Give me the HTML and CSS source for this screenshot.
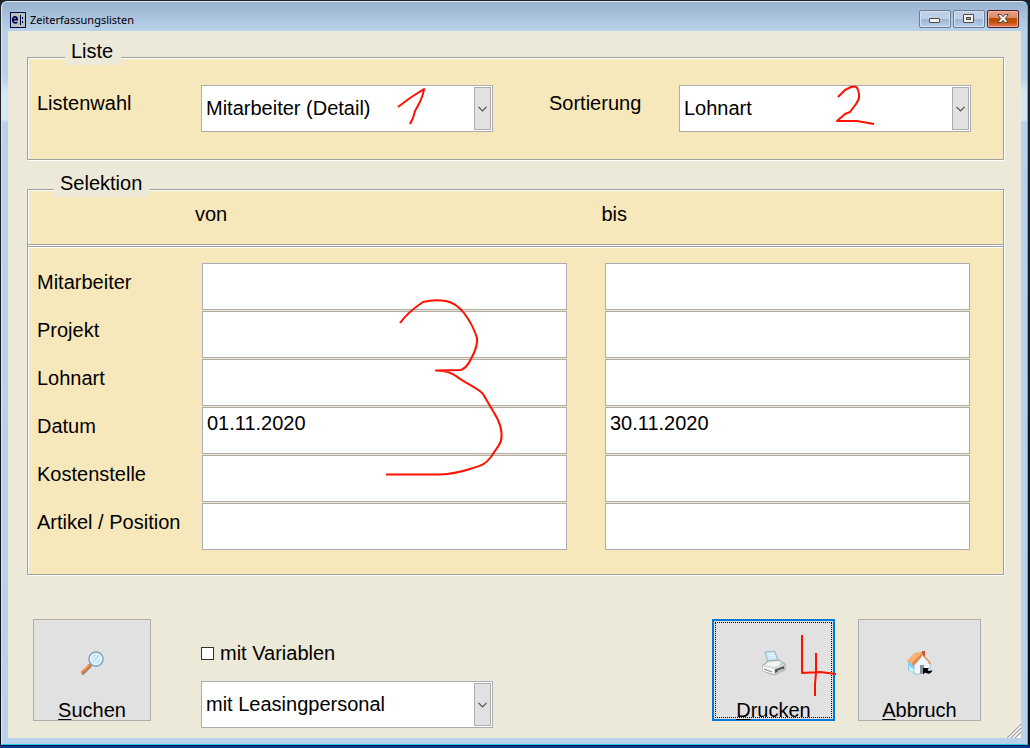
FILE: index.html
```html
<!DOCTYPE html>
<html lang="de">
<head>
<meta charset="utf-8">
<title>Zeiterfassungslisten</title>
<link rel="stylesheet" href="styles.css">
</head>
<body>
<div class="window">
  <header class="titlebar">
    <svg class="app-icon" width="16" height="16" viewBox="0 0 16 16" aria-hidden="true">
      <rect x=".5" y=".5" width="15" height="15" fill="#b4c4bd" stroke="#04044e"/>
      <path d="M3 7.7H7.2C7.2 3.8 2.7 3.8 2.7 7.7C2.7 11 5.6 11.3 7.3 10.2" fill="none" stroke="#04044e" stroke-width="1.8"/>
      <path d="M10.5 3V13" stroke="#04044e"/>
      <path d="M12 5h1v2h-1zM12 9h1v2h-1z" fill="#04044e"/>
    </svg>
    <h1 class="title">Zeiterfassungslisten</h1>
    <div class="controls">
      <button class="control" type="button" aria-label="Minimieren">
        <svg width="12" height="10" viewBox="0 0 12 10"><rect x=".5" y="4.5" width="10" height="4" rx=".5" fill="#f5f3ef" stroke="#534747"/></svg>
      </button>
      <button class="control" type="button" aria-label="Maximieren">
        <svg width="12" height="10" viewBox="0 0 12 10"><rect x=".5" y=".5" width="10" height="8" rx=".5" fill="#f5f3ef" stroke="#534747"/><rect x="3.5" y="3.5" width="4" height="2" fill="#88a6c7" stroke="#534747"/></svg>
      </button>
      <button class="control control-close" type="button" aria-label="Schließen">
        <svg width="12" height="10" viewBox="0 0 12 10"><path d="M.8.5H4.2L6 2.8L7.8.5H11.2L8.3 4.5L11.2 8.5H7.8L6 6.3L4.2 8.5H.8L3.7 4.5Z" fill="#f5f1ef" stroke="#534747"/></svg>
      </button>
    </div>
  </header>

  <form class="content">
    <fieldset class="group">
      <legend class="legend legend-list">Liste</legend>
      <div class="list-row">
        <label class="label" for="liste">Listenwahl</label>
        <div class="combo">
          <select class="select" id="liste"><option>Mitarbeiter (Detail)</option></select>
          <span class="arrow"><svg width="9" height="6" viewBox="0 0 9 6"><path d="M.5.8L4.5 4.8L8.5.8" fill="none" stroke="#55504d" stroke-width="1.2"/></svg></span>
        </div>
        <label class="label label-sort" for="sort">Sortierung</label>
        <div class="combo">
          <select class="select" id="sort"><option>Lohnart</option></select>
          <span class="arrow"><svg width="9" height="6" viewBox="0 0 9 6"><path d="M.5.8L4.5 4.8L8.5.8" fill="none" stroke="#55504d" stroke-width="1.2"/></svg></span>
        </div>
      </div>
    </fieldset>

    <fieldset class="group group-selection">
      <legend class="legend">Selektion</legend>
      <div class="range-head"><span>von</span><span>bis</span></div>
      <div class="range-grid">
        <label class="label" for="ma">Mitarbeiter</label>
        <input class="field" id="ma" type="text"><input class="field field-to" type="text" aria-label="Mitarbeiter bis">
        <label class="label" for="pr">Projekt</label>
        <input class="field" id="pr" type="text"><input class="field field-to" type="text" aria-label="Projekt bis">
        <label class="label" for="la">Lohnart</label>
        <input class="field" id="la" type="text"><input class="field field-to" type="text" aria-label="Lohnart bis">
        <label class="label" for="da">Datum</label>
        <input class="field" id="da" type="text" value="01.11.2020"><input class="field field-to" type="text" value="30.11.2020" aria-label="Datum bis">
        <label class="label" for="ks">Kostenstelle</label>
        <input class="field" id="ks" type="text"><input class="field field-to" type="text" aria-label="Kostenstelle bis">
        <label class="label" for="ap">Artikel / Position</label>
        <input class="field" id="ap" type="text"><input class="field field-to" type="text" aria-label="Artikel / Position bis">
      </div>
    </fieldset>

    <div class="footer">
      <button class="action action-search" type="button">
        <svg width="24" height="24" viewBox="0 0 24 24" aria-hidden="true">
          <path d="M3 22L10 15" stroke="#8d8584" stroke-width="3.400" stroke-linecap="round"/>
          <path d="M2.500 21L9.500 14" stroke="#f07d38" stroke-width="2.600" stroke-linecap="round"/>
          <path d="M3 19.500L8.500 14" stroke="#ffc07c"/>
          <circle cx="16" cy="8" r="7" fill="#cfeaf8" stroke="#7fa0b9" stroke-width="1.400"/>
          <circle cx="16" cy="8" r="5.600" fill="#d6f0fb" stroke="#f2fbff"/>
          <path d="M12 7L16 3M13 11L19 4M17 12L20 9" stroke="#b9dff2" stroke-width="1.300"/>
        </svg>
        <span><u>S</u>uchen</span>
      </button>
      <div class="options">
        <label class="check"><input class="checkbox" type="checkbox">mit Variablen</label>
        <div class="combo">
          <select class="select" aria-label="Personal"><option>mit Leasingpersonal</option></select>
          <span class="arrow"><svg width="9" height="6" viewBox="0 0 9 6"><path d="M.5.8L4.5 4.8L8.5.8" fill="none" stroke="#55504d" stroke-width="1.2"/></svg></span>
        </div>
      </div>
      <button class="action action-default" type="button">
        <svg width="24" height="24" viewBox="0 0 24 24" aria-hidden="true">
          <path d="M3 1L13 .5L16 10L6 12Z" fill="#c1e4f8" stroke="#8baabd" stroke-width=".8"/>
          <path d="M5 3L12 2M6 5L13 4M6.500 7L14 6" stroke="#f2fbff"/>
          <path d="M1 14L6 10L17 9L23 13V19L12 24L1 20Z" fill="#d6dad7" stroke="#8f9692" stroke-width=".8"/>
          <path d="M3 14L7 11L17 10L21 13L12 16Z" fill="#f3f6f3"/>
          <path d="M1 15L12 18V23L1 20Z" fill="#fafafa"/>
          <path d="M2 18L10 21" stroke="#7a7e7c"/>
          <path d="M13 18.500L22 15V18L13 22Z" fill="#4e5653"/>
          <path d="M15 20L21 17.500L22 20L17 22Z" fill="#c1c5c3"/>
          <path d="M18 13H20" stroke="#54c278"/>
        </svg>
        <span><u>D</u>rucken</span>
      </button>
      <button class="action action-cancel" type="button">
        <svg width="26" height="24" viewBox="0 0 26 24" aria-hidden="true">
          <path d="M15 0H18V8H15Z" fill="#cb5037"/>
          <path d="M1 11L8 14V23L1 19Z" fill="#83cdf0"/>
          <path d="M2 15L7 18L9 14L7 22L2 19Z" fill="#c9effc"/>
          <path d="M7 15L15 5L23 13V20L10 23.500L7 22Z" fill="#f1f7fd" stroke="#93b7d4" stroke-width=".8"/>
          <path d="M13 14H17V22L13 23Z" fill="#8592a1"/>
          <path d="M0 10L8 2L15 1L6 13Z" fill="#f49550"/>
          <path d="M2 10L10 2M4 11L13 2" stroke="#ffc88a" stroke-width="1.200"/>
          <path d="M15 2L24 12L22 13L15 5L6 15L5 13Z" fill="#e68043"/>
          <path d="M15 4L22 11.500L21 12L15 6Z" fill="#eef5fb"/>
          <path d="M16 17H22L20.500 19C22 20.500 24 20 25.500 19C24.500 23 20.500 23.500 18.500 21.500L16 23.500Z" fill="#000"/>
        </svg>
        <span><u>A</u>bbruch</span>
      </button>
    </div>
    <svg class="grip" width="16" height="16" viewBox="0 0 16 16" aria-hidden="true">
      <path d="M0 16L16 0V16Z" fill="#fbfaf5"/>
      <path d="M2 16L16 2M6 16L16 6M10 16L16 10" stroke="#9d9da1" stroke-width="1.200"/>
    </svg>
  </form>
</div>

<svg class="ink" width="1030" height="748" viewBox="0 0 1030 748" aria-hidden="true">
  <path d="M398 107L410 98L424 89L423 94L420 102L415 111L413 118L410 124"/>
  <path d="M838 97L845 90L851 87Q857 85 858 90Q861 98 856 104L850 112L845 114L837 121L857 121L874 124"/>
  <path d="M400 323Q408 312 423 302Q434 299 446 301Q456 303 464 313Q473 325 477 338Q478 346 472 357Q467 368 461 370L436 370.500Q450 371 456 376C466 384 477 387 483 394L493 411Q504 428 501 441C498 448 495 450 491 457C484 466 479 466 470 469Q454 474 440 474.500H386"/>
  <path d="M802 635V673L820 672L836 674M816 653V673L815 684V696"/>
</svg>
</body>
</html>
```
FILE: styles.css
```css
* { box-sizing: border-box; }

body {
  margin: 0;
  min-height: 100vh;
  display: flex;
  padding: 1px 2px 3px 1px;
  background: linear-gradient(to bottom, #1f2227 0, #0a0c14 745px, #03318e 746px);
  font-family: "Liberation Sans", Arial, sans-serif;
  font-size: 20px;
  line-height: 23px;
  color: #000;
}

.window {
  flex: 1;
  display: flex;
  flex-direction: column;
  padding: 0 6px 6px;
  border: 1px solid #dce9f5;
  border-right-color: #25c9e6;
  border-bottom-color: #25c9e6;
  border-radius: 6px 6px 0 0;
  background: linear-gradient(to bottom, #98b2cf 0, #b9d1ea 29px, #b9d1ea 75px, #d5e7f5 90px, #d5e7f5 118px, #b9d1ea 120px);
}

.titlebar {
  display: flex;
  align-items: center;
  height: 29px;
  padding: 4px 2px 0 2px;
}

.app-icon { margin-top: 2px; }

.title {
  flex: 1;
  margin: 2px 0 0 4px;
  font: 400 11px/16px "Noto Sans", "Open Sans", sans-serif;
}

.controls { display: flex; gap: 2px; }

.control {
  display: grid;
  place-items: center;
  width: 32px;
  height: 18px;
  padding: 0;
  border: 1px solid #6c7b8e;
  border-radius: 2px;
  box-shadow: inset 0 0 0 1px #d3e1f0;
  background: linear-gradient(#bdd0e5 50%, #9bb5d1 50%, #b7d0ea);
}

.control-close {
  border-color: #4b202b;
  box-shadow: inset 0 0 0 1px #efb19b;
  background: linear-gradient(#e6a486, #dc8860 45%, #b84b08 45%, #c45200 70%, #f57665);
}

.content {
  position: relative;
  flex: 1;
  padding: 19px 17px 10px 19px;
  background: #ece9d8;
}

.group {
  min-width: 0;
  margin: 0;
  padding: 0;
  border: 1px solid #a0a0a0;
  box-shadow: inset 1px 1px #fff, 1px 1px #fff;
  background: #f7e8bc;
}

.group-selection { margin-top: 22px; }

.legend {
  display: flex;
  align-items: flex-end;
  height: 15px;
  margin-left: 26px;
  padding: 0 8px 2px 6px;
  background: #ece9d8;
}

.legend-list { margin-left: 37px; }

.list-row {
  display: grid;
  grid-template-columns: 164px 1fr 186px 1fr;
  padding: 20px 32px 27px 9px;
}

.label { padding-top: 7px; }

.label-sort { padding-left: 56px; }

.combo { position: relative; }

.select {
  display: block;
  width: 100%;
  height: 47px;
  padding: 0 24px 0 4px;
  appearance: none;
  border: 1px solid #abadb3;
  border-radius: 0;
  background: #fff;
  color: #000;
  font: inherit;
}

.arrow {
  position: absolute;
  top: 2px;
  right: 2px;
  bottom: 2px;
  width: 17px;
  display: grid;
  place-items: center;
  border: 1px solid #adadad;
  background: #e1e1e1;
  pointer-events: none;
}

.range-head {
  display: grid;
  grid-template-columns: 1fr 1fr;
  column-gap: 5px;
  height: 48px;
  padding: 6px 0 0 167px;
  border-bottom: 1px solid #a0a0a0;
  box-shadow: 0 1px #fff, 0 2px #a0a0a0, 0 3px #fff;
}

.range-grid {
  display: grid;
  grid-template-columns: 165px 1fr 38px 1fr;
  row-gap: 1px;
  padding: 18px 33px 24px 9px;
}

.range-grid .label { padding-top: 8px; }

.field {
  width: 100%;
  height: 47px;
  padding: 0 4px 14px;
  border: 1px solid #abadb3;
  border-radius: 0;
  background: #fff;
  color: #000;
  font: inherit;
}

.field-to { grid-column: 4; }

.footer {
  display: flex;
  align-items: flex-start;
  margin-top: 44px;
  padding: 0 23px 0 6px;
}

.action {
  display: flex;
  flex-direction: column;
  align-items: center;
  gap: 24px;
  width: 123px;
  height: 102px;
  padding: 31px 0 0;
  border: 1px solid #adadad;
  background: #e1e1e1;
  color: #000;
  font: inherit;
  white-space: nowrap;
}

.action svg,
.action span { flex-shrink: 0; }

.action u {
  text-decoration-thickness: 1px;
  text-underline-offset: 2px;
}

.action-search { width: 118px; }

.action-default {
  margin-left: auto;
  padding-top: 30px;
  border: 2px solid #0078d7;
  outline: 1px dotted #000;
  outline-offset: -4px;
}

.action-cancel { margin-left: 23px; }

.options {
  flex: 0 1 292px;
  margin-left: 50px;
  padding-top: 23px;
}

.check {
  display: flex;
  align-items: center;
  gap: 6px;
  margin-bottom: 16px;
}

.checkbox {
  appearance: none;
  width: 13px;
  height: 13px;
  margin: 0;
  border: 1px solid #333;
  background: #fff;
}

.checkbox:checked { background: #0078d7; }

.grip {
  position: absolute;
  right: 0;
  bottom: 0;
}

.ink {
  position: absolute;
  top: 0;
  left: 0;
  pointer-events: none;
  fill: none;
  stroke: #f10;
  stroke-width: 2;
  stroke-linejoin: round;
}
```
